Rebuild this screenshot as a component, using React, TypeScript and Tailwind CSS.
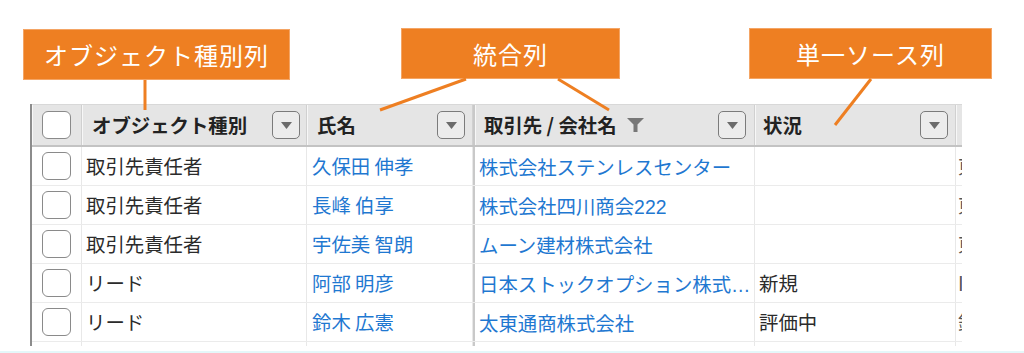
import { FC } from 'react';

type Row = {
  kind: string;
  name: string;
  company: string;
  status: string;
  edge: string;
};

const rows: Row[] = [
  { kind: '取引先責任者', name: '久保田 伸孝', company: '株式会社ステンレスセンター', status: '', edge: '東' },
  { kind: '取引先責任者', name: '長峰 伯享', company: '株式会社四川商会222', status: '', edge: '東' },
  { kind: '取引先責任者', name: '宇佐美 智朗', company: 'ムーン建材株式会社', status: '', edge: '東' },
  { kind: 'リード', name: '阿部 明彦', company: '日本ストックオプション株式会社', status: '新規', edge: 'I' },
  { kind: 'リード', name: '鈴木 広憲', company: '太東通商株式会社', status: '評価中', edge: '鈴' },
];

const Checkbox: FC = () => (
  <div className="w-[29px] h-[28px] rounded-[6px] border-[1.5px] border-[#8a8a8a] bg-white" />
);

const MenuButton: FC = () => (
  <div className="w-[28px] h-[28px] rounded-[5px] border-[1.5px] border-[#7b7b7b] bg-[#ececec] flex items-center justify-center shrink-0">
    <svg width="11" height="7" viewBox="0 0 11 7">
      <path d="M0 0h11L5.5 7z" fill="#6b6b6b" />
    </svg>
  </div>
);

const Label: FC<{ text: string; className: string }> = ({ text, className }) => (
  <div
    className={`absolute bg-[#ee7f22] border border-[#f4a565] text-white text-[24px] tracking-[1px] flex items-center justify-center ${className}`}
  >
    {text}
  </div>
);

const headCell = 'h-full flex items-center border-r border-[#d0d0d0] shadow-[inset_1px_0_0_#f7f7f7]';
const bodyCell = 'h-full flex items-center border-r border-[#e8e8e8] whitespace-nowrap overflow-hidden';

const App: FC = () => {
  return (
    <div className="relative w-[1024px] h-[353px] bg-white overflow-hidden flex flex-col font-['Noto_Sans_CJK_JP','Liberation_Sans',sans-serif]">
      <Label text="オブジェクト種別列" className="left-[23px] top-[29px] w-[267px] h-[51px]" />
      <Label text="統合列" className="left-[401px] top-[28px] w-[219px] h-[51px]" />
      <Label text="単一ソース列" className="left-[749px] top-[28px] w-[243px] h-[51px]" />

      <svg className="absolute left-0 top-0 z-10 pointer-events-none" width="1024" height="353">
        <g stroke="#ee7f22" strokeWidth="3" strokeLinecap="butt">
          <line x1="145" y1="80" x2="145" y2="110" />
          <line x1="466" y1="79" x2="380" y2="110" />
          <line x1="558" y1="79" x2="609" y2="110" />
          <line x1="871" y1="79" x2="835" y2="125" />
        </g>
      </svg>

      <div className="pt-[104px] pl-[30px]">
        <div className="w-[932px] border-l-2 border-[#8c8c8c] text-[19.4px]">
          {/* header */}
          <div className="grid grid-cols-[50px_225px_166px_282px_201px_6px] h-[43px] bg-[#e5e5e5] border-t border-[#d8d8d8] border-b-2 border-b-[#c3c3c3] font-bold text-[#222]">
            <div className={`${headCell} justify-center`}>
              <Checkbox />
            </div>
            <div className={`${headCell} justify-between pl-[10px] pr-[6px]`}>
              <span>オブジェクト種別</span>
              <MenuButton />
            </div>
            <div className={`${headCell} justify-between pl-[10px] pr-[7px]`}>
              <span>氏名</span>
              <MenuButton />
            </div>
            <div className={`${headCell} pl-[9px] pr-[8px] border-l-2 border-l-[#c9c9c9]`}>
              <span>取引先 / 会社名</span>
              <svg className="ml-[10px]" width="17" height="14" viewBox="0 0 17 14">
                <path d="M0 0h17l-6.5 6.5V14h-4V6.5z" fill="#777" />
              </svg>
              <div className="ml-auto">
                <MenuButton />
              </div>
            </div>
            <div className={`${headCell} justify-between pl-[8px] pr-[7px]`}>
              <span>状況</span>
              <MenuButton />
            </div>
            <div className="h-full shadow-[inset_1px_0_0_#f7f7f7]" />
          </div>

          {/* body */}
          {rows.map((r, i) => (
            <div
              key={i}
              className="grid grid-cols-[50px_225px_166px_282px_201px_6px] h-[39px] border-b border-[#ebebeb] text-[#2b2b2b]"
            >
              <div className={`${bodyCell} justify-center`}>
                <Checkbox />
              </div>
              <div className={`${bodyCell} pl-[4px]`}>{r.kind}</div>
              <div className={`${bodyCell} pl-[5px] text-[#1f78d1]`}>{r.name}</div>
              <div className={`${bodyCell} pl-[4px] pr-[2px] text-[#1f78d1] border-l-2 border-l-[#c9c9c9]`}>
                <span className="truncate pt-[6px] font-['Liberation_Sans','Noto_Sans_CJK_JP',sans-serif]">{r.company}</span>
              </div>
              <div className={`${bodyCell} pl-[4px]`}>{r.status}</div>
              <div className="h-full flex items-center overflow-hidden whitespace-nowrap pl-[2px] text-[#555]">
                {r.edge}
              </div>
            </div>
          ))}

          {/* partial next row */}
          <div className="grid grid-cols-[50px_225px_166px_282px_201px_6px] h-[4px]">
            <div className="border-r border-[#e8e8e8]" />
            <div className="border-r border-[#e8e8e8]" />
            <div className="border-r border-[#e8e8e8]" />
            <div className="border-r border-[#e8e8e8] border-l-2 border-l-[#c9c9c9]" />
            <div className="border-r border-[#e8e8e8]" />
            <div />
          </div>
        </div>
      </div>

      <div className="mt-auto h-[2px] bg-[#e4f7f9]" />
    </div>
  );
};

export default App;
